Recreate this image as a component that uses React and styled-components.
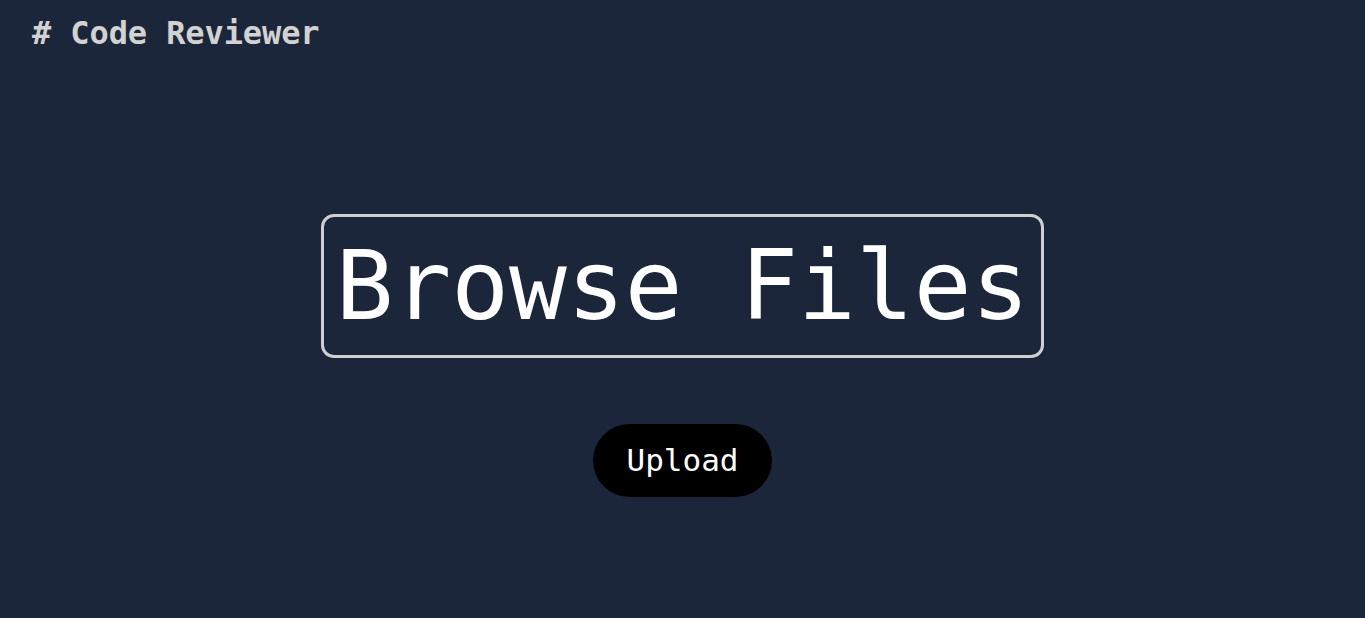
import React from "react"
import styled, { createGlobalStyle } from "styled-components"

const GlobalStyle = createGlobalStyle`
  html, body {
    margin: 0;
    padding: 0;
    background: #1c263a;
  }
  body {
    font-family: "DejaVu Sans Mono", "Liberation Mono", monospace;
  }
`

const Page = styled.div`
  min-height: 618px;
  background: #1c263a;
  padding: 13px 32px 0;
  box-sizing: border-box;
`

const Title = styled.h1`
  margin: 0;
  font-size: 32px;
  line-height: 40px;
  font-weight: 700;
  color: #d2d2d2;
  letter-spacing: -0.1px;
`

const Main = styled.main`
  display: flex;
  flex-direction: column;
  align-items: center;
  gap: 66px;
  margin-top: 161px;
`

const BrowseBox = styled.label`
  display: block;
  padding: 12px 12px 11px;
  border: 3px solid #cfcfcf;
  border-radius: 13px;
  font-size: 96px;
  line-height: 1.2;
  color: #ffffff;
  white-space: pre;
  cursor: pointer;
`

const UploadButton = styled.button`
  font-family: "DejaVu Sans Mono", "Liberation Mono", monospace;
  font-size: 31px;
  line-height: 37px;
  padding: 18px 34px;
  color: #ffffff;
  background: #000000;
  border: none;
  border-radius: 40px;
  cursor: pointer;
`

const App = () => (
  <>
    <GlobalStyle />
    <Page>
      <Title># Code Reviewer</Title>
      <Main>
        <BrowseBox>Browse Files</BrowseBox>
        <UploadButton>Upload</UploadButton>
      </Main>
    </Page>
  </>
)

export default App
